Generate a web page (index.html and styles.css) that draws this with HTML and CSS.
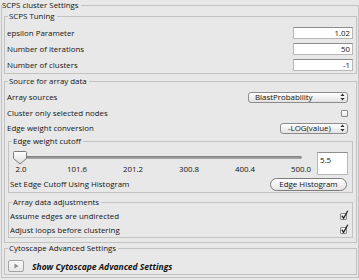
FILE: index.html
```html
<!DOCTYPE html>
<html>
<head>
<meta charset="utf-8">
<link rel="stylesheet" href="styles.css">
</head>
<body>
<fieldset class="group outer">
  <legend>SCPS cluster Settings</legend>
  <div class="outer-body">
    <fieldset class="group tuning">
      <legend>SCPS Tuning</legend>
      <div class="tuning-rows">
        <div class="row row16"><span>epsilon Parameter</span><div class="field">1.02</div></div>
        <div class="row row16"><span>Number of iterations</span><div class="field">50</div></div>
        <div class="row row16"><span>Number of clusters</span><div class="field">-1</div></div>
      </div>
    </fieldset>

    <fieldset class="group source">
      <legend>Source for array data</legend>
      <div class="source-body">
        <div class="src-rows">
          <div class="row row16"><span>Array sources</span>
            <div class="select select-wide"><span>BlastProbability</span>
              <svg class="updown" width="5" height="8" viewBox="0 0 5 8"><path d="M2.5 0.5 L4.6 3 H0.4 Z M2.5 7.5 L4.6 5 H0.4 Z" fill="#333"/></svg>
            </div>
          </div>
          <div class="row row16"><span>Cluster only selected nodes</span><div class="check"></div></div>
          <div class="row row14"><span>Edge weight conversion</span>
            <div class="select select-narrow"><span>-LOG(value)</span>
              <svg class="updown" width="5" height="8" viewBox="0 0 5 8"><path d="M2.5 0.5 L4.6 3 H0.4 Z M2.5 7.5 L4.6 5 H0.4 Z" fill="#333"/></svg>
            </div>
          </div>
        </div>

        <fieldset class="group inner cutoff">
          <legend>Edge weight cutoff</legend>
          <div class="cutoff-body">
            <div class="slider-row">
              <div class="slider">
                <div class="track">
                  <svg class="thumb" width="14" height="14" viewBox="0 0 14 14">
                    <defs><linearGradient id="tg" x1="0" y1="0" x2="0" y2="1"><stop offset="0" stop-color="#ffffff"/><stop offset="1" stop-color="#dcdcdc"/></linearGradient></defs>
                    <path d="M1.5 0.5 H12.5 Q13.5 0.5 13.5 1.5 V7.5 L7 13 L0.5 7.5 V1.5 Q0.5 0.5 1.5 0.5 Z" fill="url(#tg)" stroke="#7a7a7a"/>
                  </svg>
                </div>
                <div class="ticks">
                  <span>2.0</span><span>101.6</span><span>201.2</span><span>300.8</span><span>400.4</span><span>500.0</span>
                </div>
              </div>
              <div class="field cut-field">5.5</div>
            </div>
            <div class="row hist-row"><span>Set Edge Cutoff Using Histogram</span><div class="pill">Edge Histogram</div></div>
          </div>
        </fieldset>

        <fieldset class="group inner adjust">
          <legend>Array data adjustments</legend>
          <div class="adjust-body">
            <div class="row row14"><span>Assume edges are undirected</span><div class="check checked"><svg class="tick" width="9" height="10" viewBox="0 0 9 10"><path d="M1.8 5.6 L3.6 8.2 L7.8 0.8" fill="none" stroke="#222" stroke-width="1.3"/></svg></div></div>
            <div class="row row14"><span>Adjust loops before clustering</span><div class="check checked"><svg class="tick" width="9" height="10" viewBox="0 0 9 10"><path d="M1.8 5.6 L3.6 8.2 L7.8 0.8" fill="none" stroke="#222" stroke-width="1.3"/></svg></div></div>
          </div>
        </fieldset>
      </div>
    </fieldset>

    <fieldset class="group advanced">
      <legend>Cytoscape Advanced Settings</legend>
      <div class="adv-body">
        <div class="disclose"><svg width="5" height="6" viewBox="0 0 5 6"><path d="M0.5 0.5 L4.5 3 L0.5 5.5 Z" fill="#8a8a8a"/></svg></div>
        <span class="adv-label">Show Cytoscape Advanced Settings</span>
      </div>
    </fieldset>
  </div>
</fieldset>
</body>
</html>
```

FILE: styles.css
```css
* { box-sizing: border-box; }

body {
  margin: 0;
  width: 359px;
  height: 280px;
  overflow: hidden;
  background: #e8e8e8;
  font-family: "Open Sans", "DejaVu Sans", sans-serif;
  font-size: 7.9px;
  color: #141414;
}

fieldset {
  margin: 0;
  padding: 0;
  min-width: 0;
  border: 1px solid #c2c2c2;
}

legend {
  padding: 0 2px 0 0;
  height: 10px;
  line-height: 10px;
}

.outer {
  margin-left: 1px;
  width: 358px;
}
.outer > legend { margin-left: 0; }

.outer-body {
  padding: 1px 1px 2px 2px;
  display: flex;
  flex-direction: column;
}

.tuning > legend,
.source > legend,
.advanced > legend,
.inner > legend { margin-left: 3px; padding-left: 1px; }

.tuning-rows { padding: 4px 3px 0 2px; }

.row {
  display: flex;
  align-items: center;
  justify-content: space-between;
}
.row16 { height: 16px; }
.row14 { height: 14px; }

.field {
  width: 60px;
  height: 12px;
  background: #fff;
  border: 1px solid #b8b8b8;
  border-top-color: #8e8e8e;
  text-align: right;
  padding-right: 2px;
  line-height: 10px;
}

.source { margin-top: 2px; }
.source-body { padding: 3px 0 4px 0; }
.src-rows { padding: 0 8px 0 2px; }

.select {
  display: flex;
  align-items: center;
  justify-content: space-between;
  height: 11px;
  border: 1px solid #8c8c8c;
  border-radius: 3px;
  background: linear-gradient(#ffffff, #e2e2e2);
  padding: 0 2px 0 6px;
  line-height: 9px;
}
.select-wide { width: 100px; }
.select-narrow { width: 68px; padding-left: 7px; }
.updown { display: block; }

.check {
  position: relative;
  width: 7px;
  height: 7px;
  border: 1px solid #8a8a8a;
  border-radius: 1px;
  background: linear-gradient(#ffffff, #e6e6e6);
}
.tick {
  position: absolute;
  left: -1px;
  top: -4px;
}

.inner { margin: 1px 3px 0 3px; }
.cutoff-body { padding: 4px 4px 0 1px; }

.slider-row { display: flex; height: 26px; }
.slider { width: 302px; }
.track {
  position: relative;
  height: 3px;
  margin: 6px 10px 5px 7px;
  border-radius: 2px;
  background: linear-gradient(#7c7c7c, #b0b0b0);
}
.thumb {
  position: absolute;
  left: -4px;
  top: -5px;
}
.ticks {
  display: flex;
  justify-content: space-between;
  height: 10px;
  line-height: 10px;
}
.ticks span { width: 22px; text-align: center; }

.cut-field {
  width: 31px;
  height: 23px;
  margin: 2px 0 0 5px;
  text-align: left;
  padding: 2px 0 0 2px;
}

.hist-row { height: 16px; }
.pill {
  width: 77px;
  height: 13px;
  margin-right: 1px;
  border: 1px solid #7c7c7c;
  border-radius: 7px;
  background: linear-gradient(#ffffff, #e4e4e4);
  text-align: center;
  line-height: 11px;
}

.adjust { margin-top: 4px; }
.adjust-body { padding: 2px 5px 0 1px; }

.advanced { margin-top: 0; }
.adv-body {
  display: flex;
  align-items: center;
  height: 21px;
  padding: 6px 0 1px 3px;
}
.disclose {
  width: 16px;
  height: 12px;
  border: 1px solid #a4a4a4;
  border-radius: 2px;
  background: linear-gradient(#fafafa, #e6e6e6);
  display: flex;
  align-items: center;
  justify-content: center;
}
.disclose svg { display: block; }
.adv-label {
  margin-left: 8px;
  font-size: 8.5px;
  font-weight: bold;
  font-style: italic;
}
```
